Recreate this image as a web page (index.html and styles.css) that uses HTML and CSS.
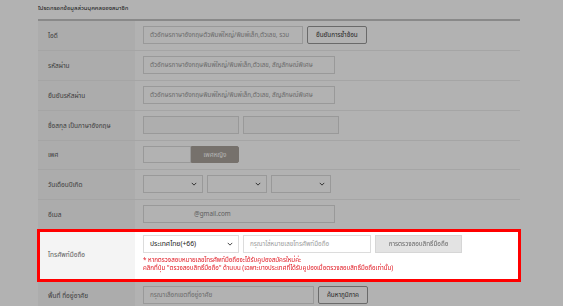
FILE: index.html
```html
<!DOCTYPE html>
<html>
  <head>
    <meta charset="UTF-8">
    <meta name="viewport" content="width=device-width, initial-scale=1">
    <title>สมัครสมาชิก</title>
    <link rel="stylesheet" href="styles.css">
  </head>
  <body>
    <div class="wrap">
      <h4 class="form-title">โปรดกรอกข้อมูลส่วนบุคคลของสมาชิก</h4>

      <div class="row">
        <div class="row-label">ไอดี</div>
        <div class="row-value">
          <div class="field w160">ตัวอักษรภาษาอังกฤษตัวพิมพ์ใหญ่/พิมพ์เล็ก,ตัวเลข, รวม</div>
          <button class="btn btn-line">ยืนยันการซ้ำซ้อน</button>
        </div>
      </div>

      <div class="row">
        <div class="row-label">รหัสผ่าน</div>
        <div class="row-value">
          <div class="field w192">ตัวอักษรภาษาอังกฤษพิมพ์ใหญ่/พิมพ์เล็ก,ตัวเลข, สัญลักษณ์พิเศษ</div>
        </div>
      </div>

      <div class="row">
        <div class="row-label">ยืนยันรหัสผ่าน</div>
        <div class="row-value">
          <div class="field w192">ตัวอักษรภาษาอังกฤษพิมพ์ใหญ่/พิมพ์เล็ก,ตัวเลข, สัญลักษณ์พิเศษ</div>
        </div>
      </div>

      <div class="row">
        <div class="row-label">ชื่อสกุล เป็นภาษาอังกฤษ</div>
        <div class="row-value">
          <div class="field w96 filled"></div>
          <div class="field w96 filled"></div>
        </div>
      </div>

      <div class="row">
        <div class="row-label">เพศ</div>
        <div class="row-value">
          <div class="gender">
            <span class="gender-opt"></span>
            <span class="gender-opt on">เพศหญิง</span>
          </div>
        </div>
      </div>

      <div class="row">
        <div class="row-label">วันเดือนปีเกิด</div>
        <div class="row-value">
          <div class="field select w60"><span></span><svg class="chev" viewBox="0 0 8 5"><path d="M1 1l3 3 3-3"/></svg></div>
          <div class="field select w60"><span></span><svg class="chev" viewBox="0 0 8 5"><path d="M1 1l3 3 3-3"/></svg></div>
          <div class="field select w60"><span></span><svg class="chev" viewBox="0 0 8 5"><path d="M1 1l3 3 3-3"/></svg></div>
        </div>
      </div>

      <div class="row">
        <div class="row-label">อีเมล</div>
        <div class="row-value">
          <div class="field w192 email">@gmail.com</div>
        </div>
      </div>

      <div class="row focus">
        <div class="row-label">โทรศัพท์มือถือ</div>
        <div class="row-value stack">
          <div class="line">
            <div class="field select w96 country"><span>ประเทศไทย(+66)</span><svg class="chev" viewBox="0 0 8 5"><path d="M1 1l3 3 3-3"/></svg></div>
            <div class="field w128">กรุณาใส่หมายเลขโทรศัพท์มือถือ</div>
            <button class="btn btn-grey">การตรวจสอบสิทธิ์มือถือ</button>
          </div>
          <p class="note">* หากตรวจสอบหมายเลขโทรศัพท์มือถือจะได้รับคูปองสมัครใหม่ค่ะ<br>คลิกที่ปุ่ม "ตรวจสอบสิทธิ์มือถือ" ด้านบน (เฉพาะบางประเทศที่ได้รับคูปองเมื่อตรวจสอบสิทธิ์มือถือเท่านั้น)</p>
        </div>
      </div>

      <div class="row">
        <div class="row-label">พื้นที่ ที่อยู่อาศัย</div>
        <div class="row-value">
          <div class="field w171">กรุณาเลือกเขตที่อยู่อาศัย</div>
          <button class="btn btn-line">ค้นหาภูมิภาค</button>
        </div>
      </div>
    </div>

    <div class="dim"></div>
  </body>
</html>
```

FILE: styles.css
```css
body {
  margin: 0;
  background-color: #fff;
  font-family: "Noto Sans Thai", Tahoma, "DejaVu Sans", "Noto Sans", sans-serif;
  color: #444;
}
.wrap {
  width: 482px;
  margin-left: 38px;
}
.form-title {
  margin: 0;
  padding-top: 4px;
  height: 15px;
  font-size: 6px;
  font-weight: normal;
  color: #222;
  border-bottom: 2px solid #c4c4c4;
}

.row {
  display: flex;
  border-bottom: 1px solid #ececec;
  background-color: #fff;
}
.row-label {
  width: 97px;
  box-sizing: border-box;
  padding-left: 10px;
  display: flex;
  align-items: center;
  background-color: #f6f6f6;
  font-size: 6.5px;
  color: #5a5a5a;
}
.row-value {
  flex: 1;
  display: flex;
  gap: 4px;
  padding: 5px 8px 6px;
}
.row-value.stack {
  flex-direction: column;
  gap: 0;
}
.line {
  display: flex;
  gap: 4px;
}

.field {
  height: 18px;
  box-sizing: border-box;
  border: 1px solid #dcdcdc;
  background-color: #fff;
  padding: 0 6px;
  display: flex;
  align-items: center;
  font-size: 6.3px;
  color: #9a9a9a;
  white-space: nowrap;
  overflow: hidden;
}
.w60 { width: 60px; }
.w96 { width: 96px; }
.w128 { width: 128px; }
.w160 { width: 160px; }
.w171 { width: 171px; }
.w192 { width: 192px; }
.field.filled {
  background-color: #fafafa;
}
.field.email {
  padding-left: 50px;
  color: #888;
}
.select {
  justify-content: space-between;
  padding-right: 5px;
}
.country span {
  color: #222;
  font-size: 6.8px;
}
.chev {
  width: 6px;
  height: 4px;
  fill: none;
  stroke: #444;
  stroke-width: 1.3;
}

.btn {
  height: 18px;
  box-sizing: border-box;
  padding: 0 8px;
  font-family: inherit;
  font-size: 6.3px;
  white-space: nowrap;
}
.btn-line {
  background-color: #fff;
  border: 1px solid #999;
  border-radius: 2px;
  color: #333;
}
.btn-grey {
  width: 87px;
  background-color: #e3e3e3;
  border: 1px solid #d6d6d6;
  color: #666;
}

.gender {
  display: flex;
  height: 17px;
}
.gender-opt {
  width: 48px;
  box-sizing: border-box;
  border: 1px solid #dcdcdc;
  background-color: #fff;
  display: flex;
  align-items: center;
  justify-content: center;
  font-size: 6.3px;
}
.gender-opt.on {
  background-color: #aaa39b;
  border-color: #aaa39b;
  color: #fff;
  border-radius: 0 2px 2px 0;
}

.note {
  margin: 3px 0 0;
  font-size: 6.2px;
  line-height: 8px;
  color: #e0141e;
}

.row.focus {
  position: relative;
  z-index: 11;
  outline: 3px solid #f00;
  outline-offset: -2px;
}
.row.focus .row-label {
  background-color: #f4f4f4;
}
.row.focus .row-value {
  padding-bottom: 8px;
}

.dim {
  position: fixed;
  top: 0;
  left: 0;
  right: 0;
  bottom: 0;
  background: rgba(0, 0, 0, 0.3);
  z-index: 10;
}
```
